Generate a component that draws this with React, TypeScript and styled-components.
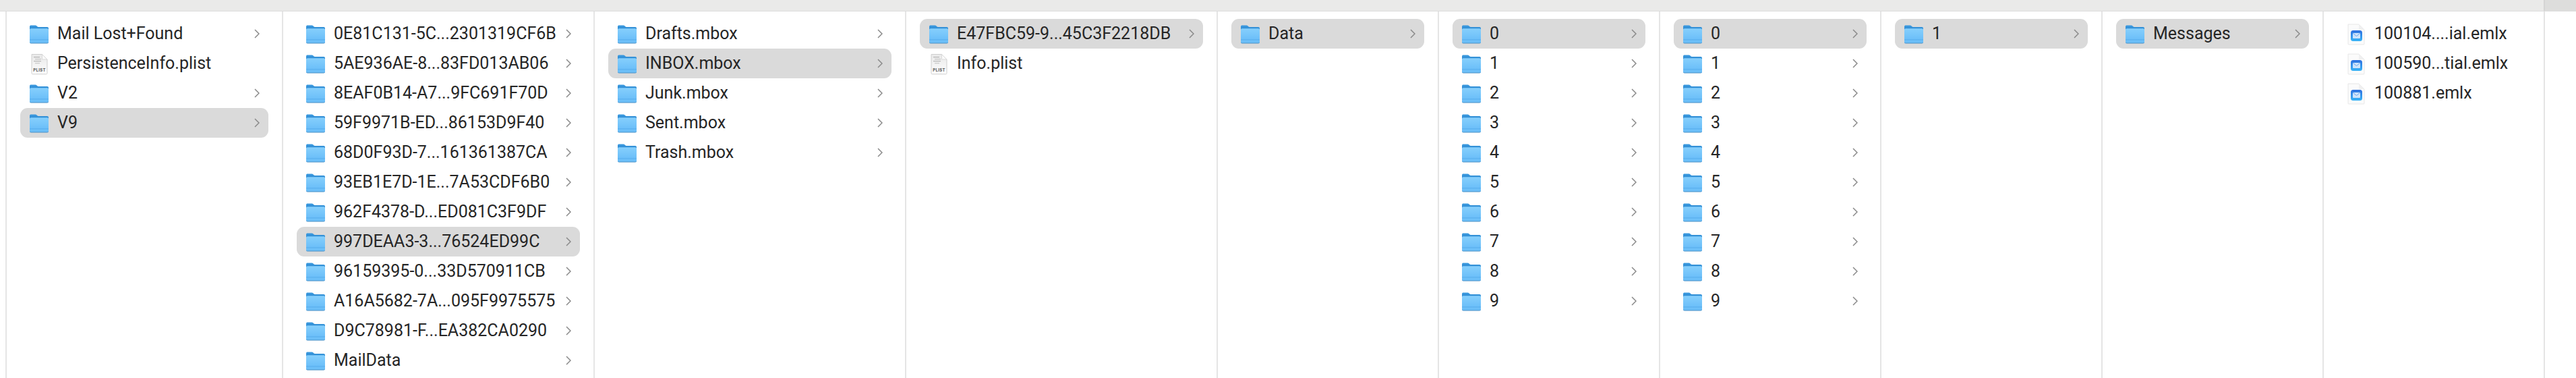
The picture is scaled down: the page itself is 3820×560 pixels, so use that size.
import React from "react";
import styled, { createGlobalStyle } from "styled-components";

type Kind = "folder" | "plist" | "mail";
interface Entry {
  name: string;
  kind?: Kind;
  selected?: boolean;
}
interface ColumnData {
  width: number;
  entries: Entry[];
}

const digits = (selected?: number): Entry[] =>
  Array.from({ length: 10 }, (_, i) => ({ name: String(i), selected: i === selected }));

const COLUMNS: ColumnData[] = [
  {
    width: 410,
    entries: [
      { name: "Mail Lost+Found" },
      { name: "PersistenceInfo.plist", kind: "plist" },
      { name: "V2" },
      { name: "V9", selected: true },
    ],
  },
  {
    width: 462,
    entries: [
      { name: "0E81C131-5C...2301319CF6B" },
      { name: "5AE936AE-8...83FD013AB06" },
      { name: "8EAF0B14-A7...9FC691F70D" },
      { name: "59F9971B-ED...86153D9F40" },
      { name: "68D0F93D-7...161361387CA" },
      { name: "93EB1E7D-1E...7A53CDF6B0" },
      { name: "962F4378-D...ED081C3F9DF" },
      { name: "997DEAA3-3...76524ED99C", selected: true },
      { name: "96159395-0...33D570911CB" },
      { name: "A16A5682-7A...095F9975575" },
      { name: "D9C78981-F...EA382CA0290" },
      { name: "MailData" },
    ],
  },
  {
    width: 462,
    entries: [
      { name: "Drafts.mbox" },
      { name: "INBOX.mbox", selected: true },
      { name: "Junk.mbox" },
      { name: "Sent.mbox" },
      { name: "Trash.mbox" },
    ],
  },
  {
    width: 462,
    entries: [
      { name: "E47FBC59-9...45C3F2218DB", selected: true },
      { name: "Info.plist", kind: "plist" },
    ],
  },
  { width: 328, entries: [{ name: "Data", selected: true }] },
  { width: 328, entries: digits(0) },
  { width: 328, entries: digits(0) },
  { width: 328, entries: [{ name: "1", selected: true }] },
  { width: 328, entries: [{ name: "Messages", selected: true }] },
  {
    width: 328,
    entries: [
      { name: "100104....ial.emlx", kind: "mail" },
      { name: "100590...tial.emlx", kind: "mail" },
      { name: "100881.emlx", kind: "mail" },
    ],
  },
];

const Global = createGlobalStyle`
  html, body { margin: 0; padding: 0; background: #fff; }
  body { font-family: Roboto, "Liberation Sans", sans-serif; }
`;

const Window = styled.div`
  width: 3820px;
  height: 560px;
  overflow: hidden;
  display: flex;
  flex-direction: column;
  background: #fff;
`;

const TopBar = styled.div`
  height: 17px;
  flex: none;
  display: flex;
  border-bottom: 1px solid #dcdcdc;
  box-sizing: border-box;
`;

const TopBarMain = styled.div`
  width: 3774px;
  flex: none;
  background: #eaeae9;
  border-right: 2px solid #d4d4d4;
  box-sizing: border-box;
`;

const TopBarEnd = styled.div`
  flex: 1;
  background: #dddddc;
`;

const Browser = styled.div`
  flex: 1;
  min-height: 0;
  display: flex;
`;

const Gutter = styled.div`
  width: 10px;
  flex: none;
  box-sizing: border-box;
  border-right: 2px solid #e5e5e5;
`;

const Column = styled.div<{ $width: number }>`
  width: ${(p) => p.$width}px;
  flex: none;
  box-sizing: border-box;
  border-right: 2px solid #e5e5e5;
  padding: 11px 20px 0 20px;
  overflow: hidden;
`;

const Row = styled.div<{ $selected?: boolean }>`
  height: 44px;
  display: flex;
  align-items: center;
  padding: 0 13px 0 14px;
  border-radius: 11px;
  background: ${(p) => (p.$selected ? "#dadada" : "transparent")};
`;

const IconBox = styled.span`
  width: 28px;
  height: 30px;
  flex: none;
  margin-right: 13px;
  display: flex;
`;

const Name = styled.span`
  flex: 1;
  min-width: 0;
  font-size: 25px;
  line-height: 44px;
  color: #262626;
  white-space: nowrap;
`;

const Chevron = styled.svg`
  width: 8px;
  height: 14px;
  flex: none;
`;

const FolderIcon: React.FC = () => (
  <svg width="28" height="30" viewBox="0 0 28 30">
    <defs>
      <linearGradient id="folderBody" x1="0" y1="0" x2="0" y2="1">
        <stop offset="0" stopColor="#86cffc" />
        <stop offset="1" stopColor="#62b9f8" />
      </linearGradient>
      <linearGradient id="folderTab" x1="0" y1="0" x2="0" y2="1">
        <stop offset="0" stopColor="#3d9be0" />
        <stop offset="1" stopColor="#1f7cc6" />
      </linearGradient>
    </defs>
    <path d="M0 4.500C0 3 1 2.500 2 2.500h6.500c1.500 0 2 1.600 3.500 2.200 .6 .2 1.200 .3 2 .3h12c1.200 0 2 .8 2 2v6H0z" fill="url(#folderTab)" />
    <path d="M0 9c0-1 .8-1.800 1.800-1.800h24.400c1 0 1.800 .8 1.800 1.800v18c0 1.200-.8 2-2 2H2c-1.200 0-2-.8-2-2z" fill="url(#folderBody)" />
    <rect x="0" y="23.500" width="28" height="1" fill="#52a8ea" />
    <path d="M0 24.500h28V27c0 1.200-.8 2-2 2H2c-1.200 0-2-.8-2-2z" fill="#6cbff8" />
    <path d="M0 27.500c0 1.200.8 2 2 2h24c1.200 0 2-.8 2-2v-.6c0 1-.8 1.500-2 1.500H2c-1.200 0-2-.5-2-1.500z" fill="#4a8fc4" />
  </svg>
);

const PlistIcon: React.FC = () => (
  <svg width="28" height="32" viewBox="0 0 28 32">
    <defs>
      <linearGradient id="plistPage" x1="0" y1="0" x2="0" y2="1">
        <stop offset="0" stopColor="#e9e9e9" />
        <stop offset="0.65" stopColor="#f6f6f6" />
        <stop offset="1" stopColor="#ffffff" />
      </linearGradient>
    </defs>
    <path d="M3 1.500h15.500L26 9v20.500c0 .8-.6 1.300-1.300 1.300H4.300c-.7 0-1.300-.5-1.300-1.300z" fill="url(#plistPage)" stroke="#cfcfcf" strokeWidth="1" />
    <path d="M18.500 1.500V9H26z" fill="#fafafa" stroke="#d4d4d4" strokeWidth="0.8" />
    <rect x="6" y="5" width="9" height="1.200" fill="#b5b5b5" />
    <rect x="8" y="8" width="9" height="1.200" fill="#c4c4c4" />
    <rect x="6" y="11" width="11" height="1.200" fill="#b5b5b5" />
    <rect x="8" y="14" width="7" height="1.200" fill="#c9c9c9" />
    <text x="14.500" y="27" textAnchor="middle" fontSize="6" fontWeight="700" fontFamily="Inter, sans-serif" letterSpacing="0.3" fill="#555">PLIST</text>
  </svg>
);

const MailIcon: React.FC = () => (
  <svg width="28" height="32" viewBox="0 0 28 32">
    <defs>
      <linearGradient id="mailBlue" x1="0" y1="0" x2="0" y2="1">
        <stop offset="0" stopColor="#2f6fdf" />
        <stop offset="1" stopColor="#38b4f6" />
      </linearGradient>
    </defs>
    <path d="M2 1h16l8 8v21c0 .6-.4 1-1 1H3c-.6 0-1-.4-1-1z" fill="#fbfbfb" stroke="#e2e2e2" strokeWidth="0.8" />
    <path d="M18 1v8h8z" fill="#f0f0f0" />
    <rect x="6" y="10" width="17" height="16" rx="3.500" fill="url(#mailBlue)" />
    <rect x="9" y="14" width="11" height="8" rx="1" fill="#cfe4fb" />
    <path d="M9.500 14.500l5 4 5-4" fill="none" stroke="#5a9cec" strokeWidth="0.9" />
  </svg>
);

const icons: Record<Kind, React.FC> = { folder: FolderIcon, plist: PlistIcon, mail: MailIcon };

const EntryRow: React.FC<{ entry: Entry }> = ({ entry }) => {
  const kind = entry.kind ?? "folder";
  const Icon = icons[kind];
  return (
    <Row $selected={entry.selected}>
      <IconBox>
        <Icon />
      </IconBox>
      <Name>{entry.name}</Name>
      {kind === "folder" && (
        <Chevron viewBox="0 0 8 14">
          <path d="M1 1l6 6-6 6" fill="none" stroke="#8a8a8a" strokeWidth="1.500" />
        </Chevron>
      )}
    </Row>
  );
};

export default function App() {
  return (
    <Window>
      <Global />
      <TopBar>
        <TopBarMain />
        <TopBarEnd />
      </TopBar>
      <Browser>
        <Gutter />
        {COLUMNS.map((col, i) => (
          <Column key={i} $width={col.width}>
            {col.entries.map((e, j) => (
              <EntryRow key={j} entry={e} />
            ))}
          </Column>
        ))}
      </Browser>
    </Window>
  );
}
